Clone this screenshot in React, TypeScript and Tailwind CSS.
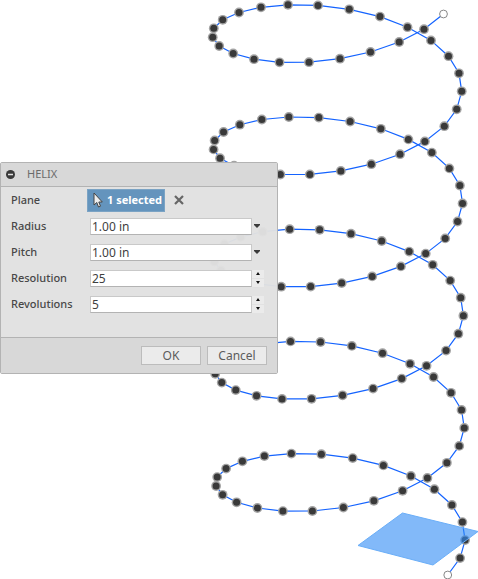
import { useState } from "react";

type Point = [number, number];

const TURNS = 5;
const TURN_SHIFT: Point = [0.85, 112.2];

// One revolution of the helix, projected to the canvas, from its upper end.
const TURN: Point[] = [
  [443.5, 14], [424, 29.2], [399.2, 42], [370.5, 52], [340, 58.7],
  [309, 62.2], [279.5, 62.3], [254, 59.2], [233.2, 53.5], [219.2, 46],
  [212.7, 37.2], [213.8, 28.3], [222.7, 19.8], [239, 12.5], [261, 7.3],
  [288, 4.8], [318, 5.4], [349.3, 9.3], [380, 16.6], [407.5, 27.2],
  [431, 40.4], [448.5, 56.2], [459, 73.3], [461.7, 91.3], [456.7, 109.3],
];

const points: Point[] = Array.from({ length: TURNS }).flatMap((_, n) =>
  TURN.map(([x, y]): Point => [x + n * TURN_SHIFT[0], y + n * TURN_SHIFT[1]]),
);
points.push([TURN[0][0] + TURNS * TURN_SHIFT[0], TURN[0][1] + TURNS * TURN_SHIFT[1]]);

function HelixDrawing() {
  const last = points.length - 1;
  return (
    <svg className="absolute top-0 left-0" width="478" height="579" viewBox="0 0 478 579" aria-hidden="true">
      <polyline points={points.map((p) => p.join(",")).join(" ")} fill="none" stroke="#1463ff" strokeWidth="1.2" />
      {points.map(([x, y], i) =>
        i === 0 || i === last ? (
          <circle key={i} cx={x} cy={y} r="3.9" fill="#fff" stroke="#888" strokeWidth="1" />
        ) : (
          <g key={i}>
            <circle cx={x} cy={y} r="4.9" fill="#a3a3a3" />
            <circle cx={x} cy={y} r="3.5" fill="#393939" />
          </g>
        ),
      )}
      <polygon points="402.5,513 478,531.5 433,565 358,545.5" fill="#2f8bf5" fillOpacity="0.6" stroke="#6aaef8" strokeWidth="1" />
    </svg>
  );
}

const fieldClass =
  "h-[17px] w-[162px] appearance-none border border-[#c9c9c9] border-b-[#b3b3b3] bg-white px-px text-[12px] leading-[15px] text-[#3f3f3f] outline-none";

function LengthField({ id, label }: { id: string; label: string }) {
  const [value, setValue] = useState("1.00 in");
  return (
    <div className="flex h-[26px] items-center">
      <label htmlFor={id} className="w-[79px] font-medium">{label}</label>
      <input id={id} type="text" value={value} onChange={(e) => setValue(e.target.value)} className={fieldClass} />
      <button type="button" aria-label={`${label} options`} className="flex h-[17px] w-[10px] items-center justify-center">
        <svg width="6" height="4" viewBox="0 0 6 4"><path d="M0 0h6v1L3 4 0 1z" fill="#3a3a3a" /></svg>
      </button>
    </div>
  );
}

function CountField({ id, label, initial }: { id: string; label: string; initial: number }) {
  const [value, setValue] = useState(initial);
  return (
    <div className="flex h-[26px] items-center">
      <label htmlFor={id} className="w-[79px] font-medium">{label}</label>
      <input id={id} type="text" inputMode="numeric" value={value} onChange={(e) => setValue(Number(e.target.value) || 0)} className={fieldClass} />
      <div className="flex h-[17px] w-[12px] flex-col gap-px">
        <button type="button" aria-label={`Increase ${label}`} onClick={() => setValue(value + 1)} className="flex flex-1 items-center justify-center bg-[#ebebeb]">
          <svg width="4" height="3" viewBox="0 0 4 3"><path d="M0 3h4L2 0z" fill="#111" /></svg>
        </button>
        <button type="button" aria-label={`Decrease ${label}`} onClick={() => setValue(Math.max(0, value - 1))} className="flex flex-1 items-center justify-center bg-[#ebebeb]">
          <svg width="4" height="3" viewBox="0 0 4 3"><path d="M0 0h4L2 3z" fill="#111" /></svg>
        </button>
      </div>
    </div>
  );
}

function HelixDialog() {
  return (
    <form
      onSubmit={(e) => e.preventDefault()}
      className="absolute top-[162px] left-0 w-[278px] rounded-[2px] border border-[#b3b3b3] text-[11px] text-[#484848]"
    >
      <header className="flex h-[24px] items-center gap-3 border-b border-[#b3b3b3] bg-[#d8d8d8] px-[5px]">
        <button type="button" aria-label="Collapse">
          <svg className="block" width="9" height="9" viewBox="0 0 9 9">
            <circle cx="4.5" cy="4.5" r="4.5" fill="#3a3a3a" />
            <path d="M2 4.5h5" stroke="#e4e4e4" strokeWidth="1.5" />
          </svg>
        </button>
        <h1 className="text-[11px] text-[#6b6b6b]">HELIX</h1>
      </header>
      <div className="h-[151px] border-b border-[#b3b3b3] bg-[#e1e1e1]/97 pl-[10px]">
        <div className="flex h-[26px] items-center">
          <span className="w-[76px] font-medium">Plane</span>
          <button type="button" className="flex h-[23px] w-[78px] items-center gap-[4px] border border-[#7ba3c4] bg-[#6494bd] pl-[5px] font-bold whitespace-nowrap text-white">
            <svg width="10" height="16" viewBox="0 0 10 16">
              <path d="M1 1v12l2.800-2.500L5.500 15l2-.800L5.800 10H9.300z" fill="#eee" stroke="#444" strokeWidth="1" strokeLinejoin="round" />
            </svg>
            1 selected
          </button>
          <button type="button" aria-label="Clear selection" className="ml-[9px]">
            <svg className="block" width="10" height="10" viewBox="0 0 10 10">
              <path d="M1 1l8 8M9 1L1 9" stroke="#666" strokeWidth="2.2" />
            </svg>
          </button>
        </div>
        <LengthField id="radius" label="Radius" />
        <LengthField id="pitch" label="Pitch" />
        <CountField id="resolution" label="Resolution" initial={25} />
        <CountField id="revolutions" label="Revolutions" initial={5} />
      </div>
      <footer className="flex h-[35px] items-center justify-end gap-[6px] bg-[#d8d8d8] pr-[10px] text-[12px] text-[#5c5c5c]">
        <button type="submit" className="h-[19px] w-[60px] border border-[#bcbcbc] bg-[#ebebeb] leading-[17px]">OK</button>
        <button type="button" className="h-[19px] w-[60px] border border-[#bcbcbc] bg-[#ebebeb] leading-[17px]">Cancel</button>
      </footer>
    </form>
  );
}

export default function App() {
  return (
    <main className="relative min-h-screen overflow-hidden bg-white font-['Noto_Sans','Open_Sans',sans-serif]">
      <HelixDrawing />
      <HelixDialog />
    </main>
  );
}
